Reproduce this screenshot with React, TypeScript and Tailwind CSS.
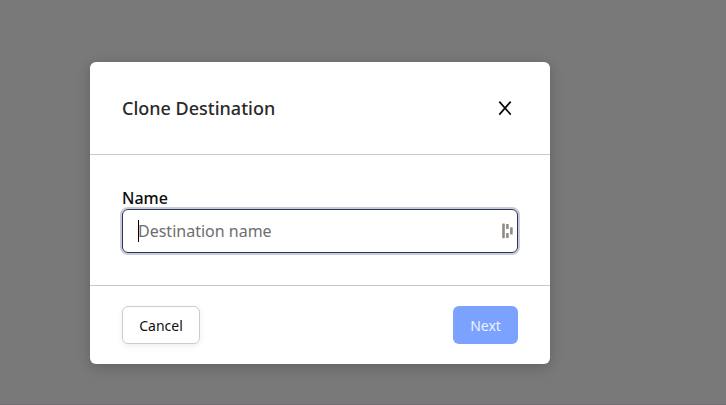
function CloseIcon() {
  return (
    <svg width="14" height="16" viewBox="0 0 14 16" fill="none" stroke="#0b0b0b" strokeWidth="1.7">
      <path d="M1.3 1.6L12.7 14.6M12.7 1.6L1.3 14.6" />
    </svg>
  );
}

function FieldIcon() {
  return (
    <svg width="12" height="16" viewBox="0 0 12 16" fill="#8f8b89">
      <rect x="0.2" y="0.6" width="2.6" height="14.6" rx="0.6" />
      <rect x="4.1" y="1" width="2.6" height="5" rx="0.6" />
      <rect x="4.1" y="10" width="2.6" height="5" rx="0.6" />
      <rect x="8.1" y="4.2" width="2.6" height="7.4" rx="0.6" />
    </svg>
  );
}

export default function App() {
  return (
    <div className="flex h-[405px] w-[726px] items-start overflow-hidden border-b border-[#756f74] bg-[#797979] pt-[62px] pl-[90px] font-['Noto_Sans','Open_Sans',sans-serif]">
      <section
        role="dialog"
        aria-label="Clone Destination"
        className="flex h-[302px] w-[460px] flex-col rounded-md bg-white shadow-[0_3px_14px_rgba(0,0,0,0.2)]"
      >
        <header className="flex h-[93px] items-center justify-between border-b border-[#c3cad2] px-8">
          <h2 className="text-[18px] leading-6 font-medium text-[#2a2a2a]">Clone Destination</h2>
          <button aria-label="Close" className="mr-[6px]">
            <CloseIcon />
          </button>
        </header>
        <div className="flex h-[130px] flex-col px-8 pt-8">
          <label htmlFor="name" className="h-[22px] text-[16px] leading-[22px] font-medium text-[#0c0c0c]">
            Name
          </label>
          <div className="flex h-11 items-center justify-between rounded-md border border-[#2c3454] pr-[3px] pl-[15px] shadow-[0_0_0_2px_#cacbda]">
            <span className="-mr-px h-[22px] w-px bg-black" />
            <input
              id="name"
              placeholder="Destination name"
              className="min-w-0 flex-1 bg-transparent text-[16px] leading-6 outline-none placeholder:text-[#6e6e6e]"
            />
            <FieldIcon />
          </div>
        </div>
        <footer className="flex flex-1 items-center justify-between border-t border-[#c3c8d2] px-8">
          <button className="h-[38px] w-[78px] rounded-md border border-[#c6cdd5] pt-0.5 text-[14px] leading-5 text-[#101010] shadow-[0_2px_6px_rgba(0,0,0,0.07)]">
            Cancel
          </button>
          <button className="h-[38px] w-[65px] rounded-md bg-[#7ba2ff] pt-0.5 text-[14px] leading-5 text-[#edf2ff]">
            Next
          </button>
        </footer>
      </section>
    </div>
  );
}
